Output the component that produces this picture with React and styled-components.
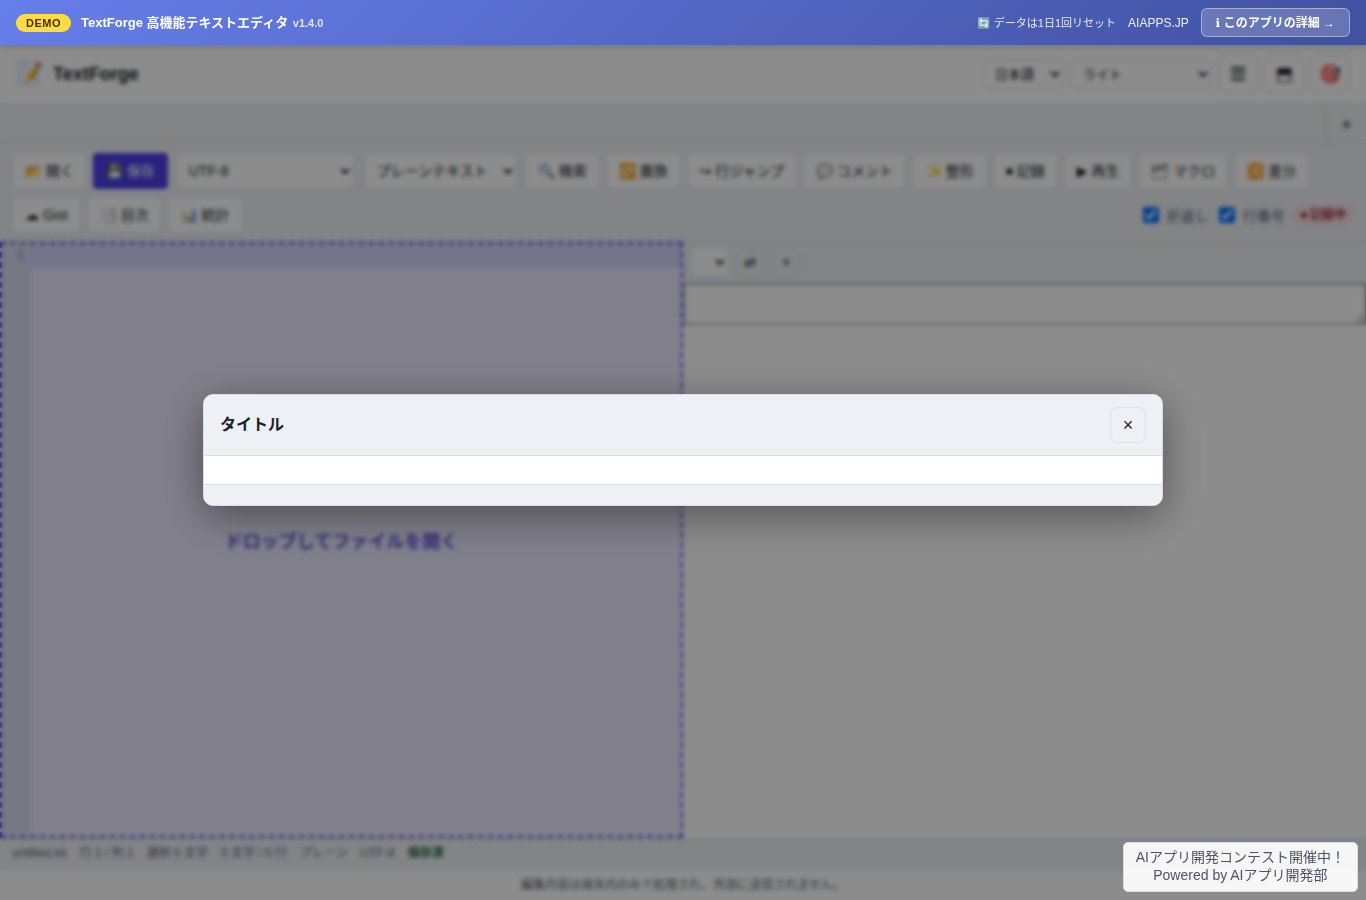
import React, { useState } from 'react';
import styled, { createGlobalStyle } from 'styled-components';

const textFont = '"Liberation Sans", "Noto Sans CJK JP", sans-serif';
const symbolFont = '"Liberation Sans", "DejaVu Sans", "Noto Sans CJK JP", sans-serif';

const GlobalStyle = createGlobalStyle`
  * {
    box-sizing: border-box;
  }

  body {
    margin: 0;
    background: #ffffff;
    color: #1a1f2b;
    font-family: ${textFont};
    font-size: 14px;
  }

  button, select, input, textarea {
    font-family: inherit;
    color: inherit;
  }
`;

const Page = styled.div`
  min-height: 100vh;
  display: flex;
  flex-direction: column;
`;

/* demo banner */

const Banner = styled.div`
  position: sticky;
  top: 0;
  z-index: 100;
  min-height: 45px;
  padding: 8px 16px;
  display: flex;
  align-items: center;
  justify-content: space-between;
  color: #ffffff;
  background: linear-gradient(135deg, #667eea 0%, #4051a0 100%);
  box-shadow: 0 2px 8px rgba(0, 0, 0, 0.15);
`;

const BannerSide = styled.div`
  display: flex;
  align-items: center;
  gap: ${props => props.$gap}px;
  line-height: 16px;
`;

const DemoBadge = styled.span`
  padding: 3px 10px;
  border-radius: 12px;
  background: #ffdd40;
  color: #4a2c0a;
  font-size: 11px;
  line-height: 12px;
  font-weight: 700;
  letter-spacing: 0.5px;
`;

const BannerTitle = styled.span`
  font-size: 13px;
  font-weight: 700;
`;

const Version = styled.span`
  margin-left: 1px;
  font-size: 11px;
  opacity: 0.8;
`;

const ResetNote = styled.span`
  font-size: 11px;
  opacity: 0.85;
`;

const BannerLink = styled.a`
  font-size: 12px;
  color: rgba(255, 255, 255, 0.9);
  text-decoration: none;
`;

const DetailLink = styled.a`
  height: 29px;
  padding: 0 14px;
  display: flex;
  align-items: center;
  border: 1px solid rgba(255, 255, 255, 0.4);
  border-radius: 6px;
  background: rgba(255, 255, 255, 0.2);
  color: #ffffff;
  font-family: ${symbolFont};
  font-size: 12px;
  font-weight: 700;
  text-decoration: none;
`;

/* app header */

const Header = styled.header`
  padding: 10px 16px;
  display: flex;
  align-items: center;
  justify-content: space-between;
  border-bottom: 1px solid #d8dde8;
`;

const Brand = styled.div`
  display: flex;
  align-items: center;
  gap: 10px;
`;

const BrandIcon = styled.span`
  font-size: 22px;
  line-height: 26px;
`;

const BrandName = styled.h1`
  margin: 0;
  font-size: 18px;
  font-weight: 700;
`;

const HeaderTools = styled.div`
  display: flex;
  align-items: center;
  gap: 6px;
`;

const Select = styled.select`
  width: ${props => props.$width}px;
  height: ${props => props.$height || 36}px;
  padding: 0 8px;
  border: 1px solid #e0e3ea;
  border-radius: ${props => props.$radius || 4}px;
  background: #ffffff;
  font-size: ${props => props.$size || 14}px;
`;

const IconButton = styled.button`
  width: ${props => props.$width || 40}px;
  height: ${props => props.$height || 38}px;
  padding: 0;
  border: 1px solid #dde0e6;
  border-radius: 8px;
  background: transparent;
  font-family: ${props => (props.$bold ? textFont : symbolFont)};
  font-size: ${props => props.$font || 18}px;
  font-weight: ${props => (props.$bold ? 700 : 400)};
`;

/* tabs */

const TabBar = styled.div`
  height: 40px;
  display: flex;
  background: #edf0f5;
  border-bottom: 1px solid #d8dde8;
`;

const TabList = styled.div`
  flex: 1;
`;

const AddTab = styled.button`
  width: 40px;
  padding: 4px 0 0;
  border: 0;
  border-left: 1px solid #d8dde8;
  background: transparent;
  font-size: 18px;
`;

/* toolbar */

const Toolbar = styled.div`
  padding: 9px 12px 8px;
  display: flex;
  flex-wrap: wrap;
  align-items: center;
  gap: 8px 6px;
  background: #edf0f5;
  border-bottom: 1px solid #d8dde8;
`;

const ToolSelect = styled(Select)`
  margin: 0 2px;
`;

const ToolButton = styled.button`
  height: 36px;
  padding: 0 12px;
  border: 1px solid ${props => (props.$primary ? '#4f3ee8' : '#e4e7ed')};
  border-radius: 4px;
  background: ${props => (props.$primary ? '#4f3ee8' : '#ffffff')};
  color: ${props => (props.$primary ? '#ffffff' : 'inherit')};
  font-family: ${symbolFont};
  font-size: 14px;
  line-height: 18px;
  white-space: nowrap;
`;

const ToolOptions = styled.div`
  margin-left: auto;
  display: flex;
  align-items: center;
  gap: 8px;
`;

const CheckLabel = styled.label`
  display: flex;
  align-items: center;
  gap: 6px;
  color: #5b6475;
`;

const Checkbox = styled.input`
  width: 16px;
  height: 16px;
  margin: 0 2px;
`;

const RecBadge = styled.span`
  padding: 2px 8px;
  border-radius: 10px;
  background: #f5dfe1;
  color: #a8324a;
  font-size: 12px;
  line-height: 16px;
  font-weight: 700;
`;

/* panes */

const Workspace = styled.main`
  flex: 1;
  display: grid;
  grid-template-columns: 1fr 1fr;
`;

const EditorPane = styled.section`
  position: relative;
  display: grid;
  grid-template-columns: 31px 1fr;
  font-family: "Liberation Mono", monospace;
`;

const Gutter = styled.div`
  padding: 2px 6px 0 0;
  background: #edf0f5;
  color: #8a92a3;
  text-align: right;
  font-size: 14px;
  line-height: 24px;
`;

const ActiveLine = styled.div`
  height: 26px;
  background: #e2ebfe;
`;

const DropZone = styled.div`
  position: absolute;
  inset: 0;
  display: flex;
  align-items: center;
  justify-content: center;
  border: 2px dashed #4f3ee8;
  background: rgba(79, 62, 232, 0.12);
  color: #5f51dc;
  font-family: ${textFont};
  font-size: 18px;
  font-weight: 700;
`;

const SplitPane = styled.section`
  display: flex;
  flex-direction: column;
`;

const SplitBar = styled.div`
  padding: 5px 8px;
  display: flex;
  align-items: center;
  gap: 6px;
  background: #edf0f5;
  border-bottom: 1px solid #d8dde8;
`;

const SplitText = styled.textarea`
  display: block;
  width: 100%;
  height: 42px;
  border: 2px solid #b4b4b4;
  border-radius: 0;
  background: #ffffff;
`;

/* bottom */

const StatusBar = styled.div`
  height: 31px;
  padding: 6px 12px;
  display: flex;
  gap: 13px;
  background: #edf0f5;
  border-top: 1px solid #d8dde8;
  color: #5b6475;
  font-size: 12px;
  line-height: 16px;
`;

const Saved = styled.span`
  color: #166534;
  font-weight: 700;
`;

const Footer = styled.footer`
  height: 31px;
  display: flex;
  align-items: center;
  justify-content: center;
  border-top: 1px solid #e4e7ed;
  color: #5b6475;
  font-size: 12px;
  line-height: 16px;
`;

/* modal */

const Backdrop = styled.div`
  position: fixed;
  inset: 0;
  z-index: 50;
  display: flex;
  align-items: center;
  justify-content: center;
  background: rgba(0, 0, 0, 0.45);
  backdrop-filter: blur(2px);
`;

const Modal = styled.div`
  width: 960px;
  max-width: 92vw;
  border: 1px solid #d8dde8;
  border-radius: 10px;
  background: #ffffff;
  box-shadow: 0 10px 40px rgba(0, 0, 0, 0.4);
  overflow: hidden;
`;

const ModalHeader = styled.div`
  padding: 12px 16px;
  display: flex;
  align-items: center;
  justify-content: space-between;
  background: #edf1f6;
  border-bottom: 1px solid #d8dde8;
`;

const ModalTitle = styled.h2`
  margin: 0;
  font-size: 16px;
  line-height: 20px;
  font-weight: 700;
`;

const ModalBody = styled.div`
  padding: 14px 16px;
`;

const ModalFooter = styled.div`
  padding: 10px 16px;
  background: #edf1f6;
  border-top: 1px solid #d8dde8;
`;

const ContestLink = styled.a`
  position: fixed;
  right: 8px;
  bottom: 8px;
  z-index: 90;
  padding: 5px 12px 7px;
  border: 1px solid #dddddd;
  border-radius: 5px;
  background: rgba(255, 255, 255, 0.93);
  color: #4a5568;
  font-size: 14px;
  line-height: 18px;
  text-align: center;
  text-decoration: none;
`;

const editTools = [
  '🔍 検索',
  '🔁 置換',
  '↪ 行ジャンプ',
  '💬 コメント',
  '✨ 整形',
  '⏺ 記録',
  '▶ 再生',
  '🗂 マクロ',
  '🔀 差分',
  '☁ Gist',
  '📑 目次',
  '📊 統計',
];

const App = () => {
  const [isModalOpen, setIsModalOpen] = useState(true);
  const [wrap, setWrap] = useState(true);
  const [lineNumbers, setLineNumbers] = useState(true);

  return (
    <Page>
      <GlobalStyle />
      <Banner>
        <BannerSide $gap={10}>
          <DemoBadge>DEMO</DemoBadge>
          <BannerTitle>
            TextForge 高機能テキストエディタ <Version>v1.4.0</Version>
          </BannerTitle>
        </BannerSide>
        <BannerSide $gap={12}>
          <ResetNote>🔄 データは1日1回リセット</ResetNote>
          <BannerLink href="#">AIAPPS.JP</BannerLink>
          <DetailLink href="#">ℹ このアプリの詳細 →</DetailLink>
        </BannerSide>
      </Banner>

      <Header>
        <Brand>
          <BrandIcon>📝</BrandIcon>
          <BrandName>TextForge</BrandName>
        </Brand>
        <HeaderTools>
          <Select $width={82} $height={32} $size={13} $radius={8} aria-label="言語">
            <option>日本語</option>
          </Select>
          <Select $width={142} $height={32} $size={13} $radius={8} aria-label="テーマ">
            <option>ライト</option>
          </Select>
          <IconButton $bold>☰</IconButton>
          <IconButton>⬒</IconButton>
          <IconButton>🎯</IconButton>
        </HeaderTools>
      </Header>

      <TabBar>
        <TabList />
        <AddTab>+</AddTab>
      </TabBar>

      <Toolbar>
        <ToolButton>📂 開く</ToolButton>
        <ToolButton $primary>💾 保存</ToolButton>
        <ToolSelect $width={178} aria-label="文字コード">
          <option>UTF-8</option>
        </ToolSelect>
        <ToolSelect $width={153} aria-label="言語モード">
          <option>プレーンテキスト</option>
        </ToolSelect>
        {editTools.map(tool => (
          <ToolButton key={tool}>{tool}</ToolButton>
        ))}
        <ToolOptions>
          <CheckLabel>
            <Checkbox type="checkbox" checked={wrap} onChange={_ => setWrap(!wrap)} />
            折返し
          </CheckLabel>
          <CheckLabel>
            <Checkbox
              type="checkbox"
              checked={lineNumbers}
              onChange={_ => setLineNumbers(!lineNumbers)}
            />
            行番号
          </CheckLabel>
          <RecBadge>⏺ 記録中</RecBadge>
        </ToolOptions>
      </Toolbar>

      <Workspace>
        <EditorPane>
          <Gutter>1</Gutter>
          <ActiveLine />
          <DropZone>ドロップしてファイルを開く</DropZone>
        </EditorPane>
        <SplitPane>
          <SplitBar>
            <Select $width={38} $height={30} aria-label="分割タブ" />
            <IconButton $width={30} $height={30} $font={14}>⇄</IconButton>
            <IconButton $width={30} $height={30} $font={14}>×</IconButton>
          </SplitBar>
          <SplitText aria-label="分割エディタ" />
        </SplitPane>
      </Workspace>

      <StatusBar>
        <span>untitled.txt</span>
        <span>行 1 / 列 1</span>
        <span>選択 0 文字</span>
        <span>0 文字 / 0 行</span>
        <span>プレーン</span>
        <span>UTF-8</span>
        <Saved>保存済</Saved>
      </StatusBar>
      <Footer>編集内容は端末内のみで処理され、外部に送信されません。</Footer>

      {isModalOpen &&
        <Backdrop>
          <Modal role="dialog" aria-labelledby="modal-title">
            <ModalHeader>
              <ModalTitle id="modal-title">タイトル</ModalTitle>
              <IconButton $width={36} $height={36} onClick={_ => setIsModalOpen(false)}>×</IconButton>
            </ModalHeader>
            <ModalBody />
            <ModalFooter />
          </Modal>
        </Backdrop>
      }

      <ContestLink href="#">
        AIアプリ開発コンテスト開催中！<br />
        Powered by AIアプリ開発部
      </ContestLink>
    </Page>
  );
};

export default App;
